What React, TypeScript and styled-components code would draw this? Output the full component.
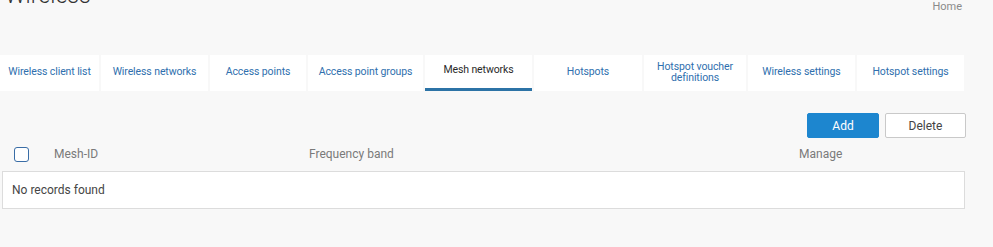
import { createGlobalStyle, styled } from "styled-components";

const GlobalStyle = createGlobalStyle`
  html, body {
    margin: 0;
    padding: 0;
    background: #f8f8f8;
    font-family: Roboto, "Liberation Sans", sans-serif;
    overflow: hidden;
  }
`;

const Page = styled.div`
  width: 993px;
  height: 247px;
  background: #f8f8f8;
  overflow: hidden;
`;

const Header = styled.div`
  height: 55px;
  display: flex;
  justify-content: space-between;
  align-items: flex-start;
  padding: 0 31px 0 5px;
`;

const Title = styled.h1`
  margin: -19px 0 0 0;
  font-size: 23px;
  line-height: 30px;
  font-weight: 300;
  color: #333333;
`;

const Crumb = styled.span`
  font-size: 11px;
  line-height: 13px;
  color: #8a8a8a;
`;

const TabStrip = styled.div`
  display: grid;
  grid-template-columns: 99px 107px 96px 115px 107px 108px 102px 107px 107px;
  column-gap: 2px;
  width: 964px;
  height: 36px;
`;

const Tab = styled.div<{ $active?: boolean }>`
  background: #ffffff;
  display: flex;
  align-items: center;
  justify-content: center;
  text-align: center;
  font-size: 10.5px;
  line-height: 11.5px;
  letter-spacing: -0.1px;
  padding-bottom: ${(p) => (p.$active ? "4px" : "2px")};
  box-sizing: border-box;
  color: ${(p) => (p.$active ? "#2a2a2a" : "#2f6fae")};
  border-bottom: ${(p) => (p.$active ? "3px solid #2c73a6" : "none")};
`;

const Content = styled.div`
  width: 963px;
  padding-left: 2px;
`;

const Toolbar = styled.div`
  display: flex;
  justify-content: flex-end;
  gap: 6px;
  margin-top: 22px;
  margin-right: -1px;
`;

const Button = styled.button<{ $primary?: boolean }>`
  height: 25px;
  box-sizing: border-box;
  border-radius: 2px;
  font-family: inherit;
  font-size: 12px;
  cursor: pointer;
  width: ${(p) => (p.$primary ? "72px" : "81px")};
  background: ${(p) => (p.$primary ? "#1d86cf" : "#ffffff")};
  color: ${(p) => (p.$primary ? "#ffffff" : "#444444")};
  border: 1px solid ${(p) => (p.$primary ? "#1d86cf" : "#c9c9c9")};
`;

const HeadRow = styled.div`
  display: grid;
  grid-template-columns: 52px 255px 490px 1fr;
  align-items: center;
  height: 33px;
  padding-bottom: 1px;
  box-sizing: border-box;
  font-size: 12px;
  color: #7a7a7a;
`;

const Check = styled.span`
  width: 15px;
  height: 15px;
  box-sizing: border-box;
  border: 1.5px solid #3a6da6;
  border-radius: 3px;
  background: #fff;
  margin-left: 12px;
`;

const Body = styled.div`
  height: 38px;
  box-sizing: border-box;
  border: 1px solid #dcdcdc;
  background: #ffffff;
  display: flex;
  align-items: center;
  padding-left: 9px;
  font-size: 12px;
  color: #454545;
`;

const tabs = [
  "Wireless client list",
  "Wireless networks",
  "Access points",
  "Access point groups",
  "Mesh networks",
  "Hotspots",
  "Hotspot voucher definitions",
  "Wireless settings",
  "Hotspot settings",
];

export default function App() {
  return (
    <Page>
      <GlobalStyle />
      <Header>
        <Title>Wireless</Title>
        <Crumb>Home</Crumb>
      </Header>
      <TabStrip>
        {tabs.map((t) => (
          <Tab key={t} $active={t === "Mesh networks"}>
            {t === "Hotspot voucher definitions" ? (
              <span>
                Hotspot voucher
                <br />
                definitions
              </span>
            ) : (
              t
            )}
          </Tab>
        ))}
      </TabStrip>
      <Content>
        <Toolbar>
          <Button $primary>Add</Button>
          <Button>Delete</Button>
        </Toolbar>
        <HeadRow>
          <Check />
          <span>Mesh-ID</span>
          <span>Frequency band</span>
          <span>Manage</span>
        </HeadRow>
        <Body>No records found</Body>
      </Content>
    </Page>
  );
}
